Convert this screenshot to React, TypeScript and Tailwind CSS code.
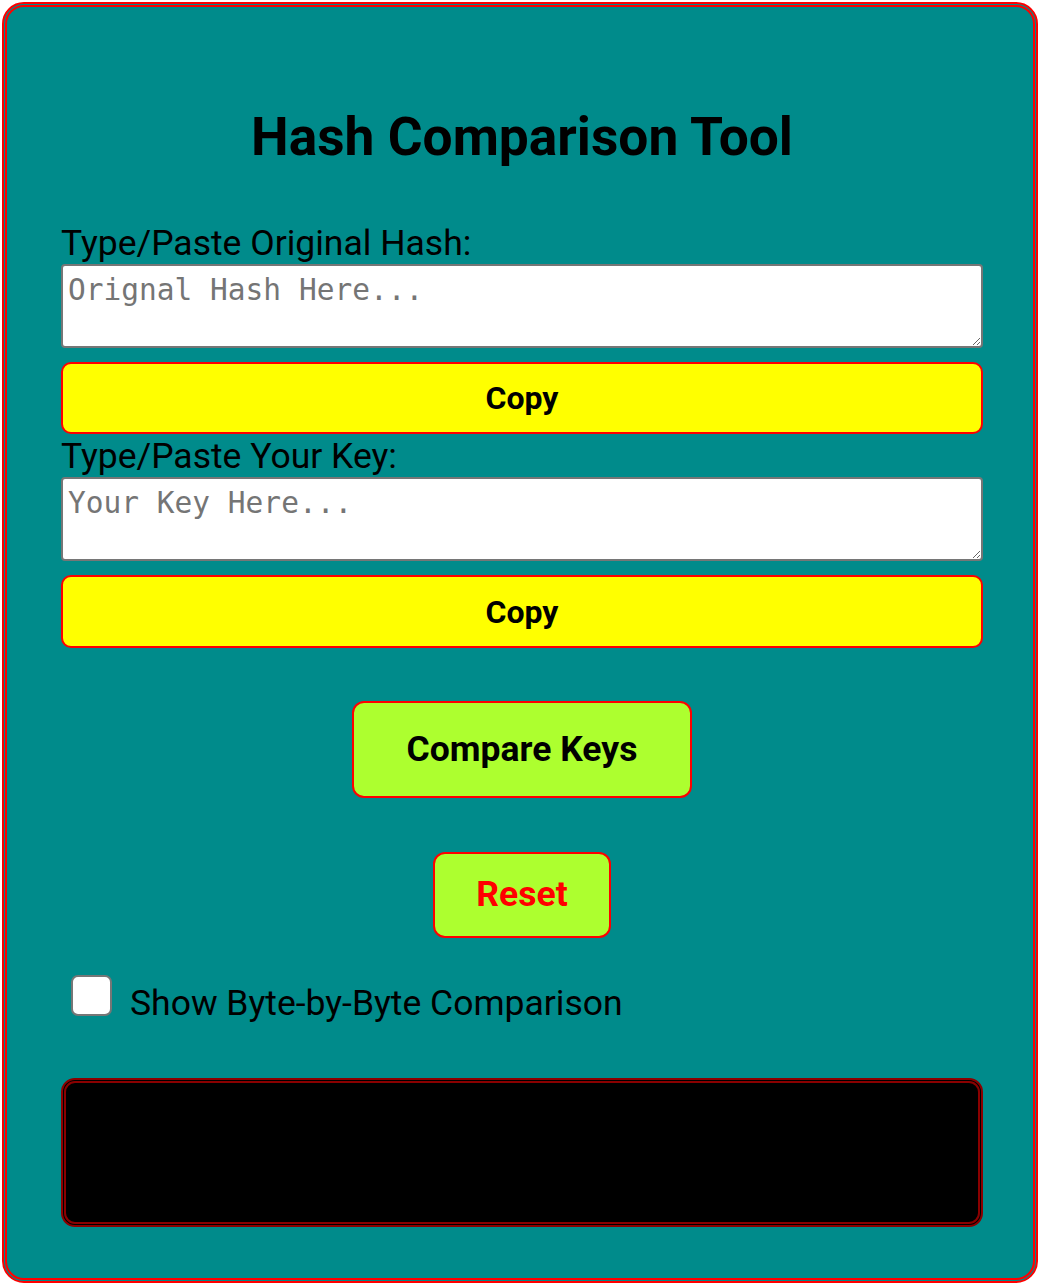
import React from "react";

export default function App() {
  return (
    <div className="w-[1040px] h-[1285px] bg-white p-[2px]" style={{ fontFamily: "Roboto, 'Liberation Sans', sans-serif" }}>
      <div className="h-full bg-[#008b8b] border-[5px] border-double border-[#ff0000] rounded-[22px] pl-[54px] pr-[50px] pt-[98px] flex flex-col">
        <h1 className="text-center text-[53.3px] font-bold text-black leading-[64px]">Hash Comparison Tool</h1>
        <label className="mt-[53px] text-[35.5px] leading-[42px] text-black">Type/Paste Original Hash:</label>
        <textarea
          placeholder="Orignal Hash Here..."
          className="h-[84px] w-full bg-white border-2 border-[#767676] rounded-[4px] px-[5px] pt-[7px] text-[29.5px] leading-[34px] placeholder-[#757575]"
          style={{ fontFamily: "'DejaVu Sans Mono', monospace" }}
        />
        <button className="mt-[14px] h-[72px] w-full bg-[#ffff00] border-2 border-[#ff0000] rounded-[10px] text-[32px] font-bold text-black">Copy</button>
        <label className="mt-[1px] text-[35.5px] leading-[42px] text-black">Type/Paste Your Key:</label>
        <textarea
          placeholder="Your Key Here..."
          className="h-[84px] w-full bg-white border-2 border-[#767676] rounded-[4px] px-[5px] pt-[7px] text-[29.5px] leading-[34px] placeholder-[#757575]"
          style={{ fontFamily: "'DejaVu Sans Mono', monospace" }}
        />
        <button className="mt-[14px] h-[73px] w-full bg-[#ffff00] border-2 border-[#ff0000] rounded-[10px] text-[32px] font-bold text-black">Copy</button>
        <div className="flex justify-center mt-[53px]">
          <button className="w-[340px] h-[97px] bg-[#adff2f] border-2 border-[#ff0000] rounded-[12px] text-[35.5px] font-bold text-black">Compare Keys</button>
        </div>
        <div className="flex justify-center mt-[54px]">
          <button className="w-[178px] h-[86px] bg-[#adff2f] border-2 border-[#ff0000] rounded-[12px] text-[35.5px] font-bold text-[#ff0000]">Reset</button>
        </div>
        <div className="flex items-start mt-[37px] pl-[10px]">
          <input type="checkbox" className="appearance-none w-[41px] h-[41px] bg-white border-2 border-[#767676] rounded-[7px] shrink-0" />
          <span className="ml-[18px] mt-[7px] text-[35.5px] leading-[42px] text-black">Show Byte-by-Byte Comparison</span>
        </div>
        <div className="mt-[54px] h-[149px] w-full bg-black border-[5px] border-double border-[#8b0000] rounded-[14px]"></div>
      </div>
    </div>
  );
}
